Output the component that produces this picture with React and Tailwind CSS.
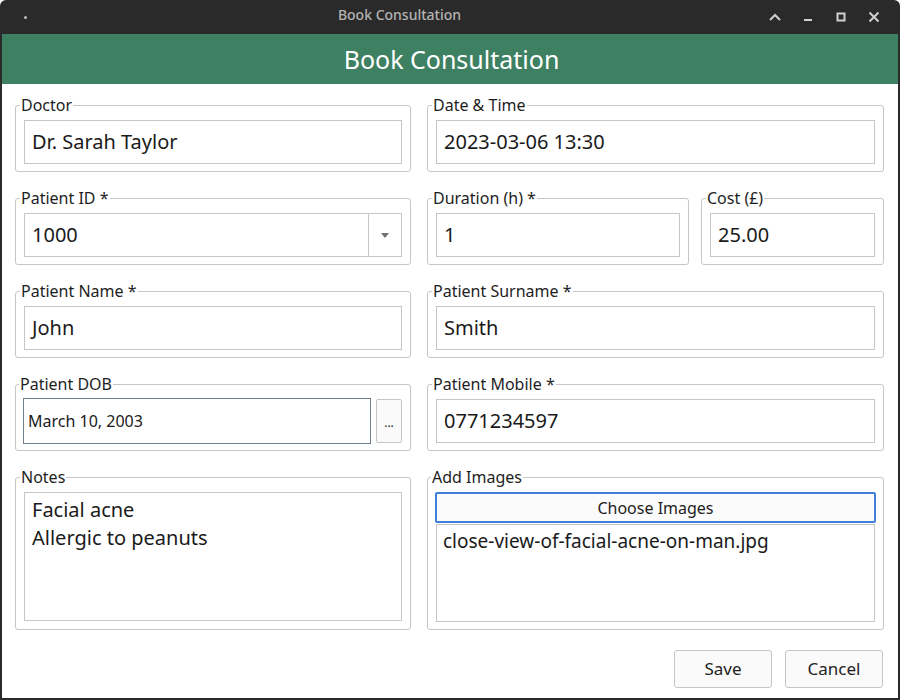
import { useState } from "react";

const font = { fontFamily: '"Noto Sans", "Open Sans", sans-serif' };

const Group = ({ label, className = "", children }) => (
  <fieldset
    className={`border border-[#c6c6c6] rounded-[3px] px-[8px] pt-[5px] pb-[7px] min-w-0 ${className}`}
  >
    <legend className="ml-[-4px] px-[1px] text-[16px] leading-[20px] text-[#1e1e1e]">
      {label}
    </legend>
    {children}
  </fieldset>
);

const TextBox = ({ value }) => (
  <div className="h-[44px] border border-[#c6c6c6] flex items-center px-[7px] text-[20px] text-[#1a1a1a] bg-white">
    {value}
  </div>
);

const App = () => {
  const [notes] = useState(["Facial acne", "Allergic to peanuts"]);

  return (
    <div
      className="w-[900px] h-[700px] bg-[#2a2a2a] rounded-tl-[6px] rounded-tr-[6px] flex flex-col"
      style={font}
    >
      {/* title bar */}
      <div className="h-[34px] flex items-center">
        <div className="w-[3px] h-[3px] rounded-full bg-[#bdbdbd] ml-[24px]" />
        <div className="flex-1 text-center text-[14px] text-[#b4b4b4] font-medium pb-[6px] pl-[4px]">
          Book Consultation
        </div>
        <div className="flex items-center gap-[19px] mr-[19px] text-[#cfcfcf]">
          <svg width="14" height="14" viewBox="0 0 14 14">
            <path d="M2 10 L7 5 L12 10" fill="none" stroke="currentColor" strokeWidth="2" />
          </svg>
          <svg width="14" height="14" viewBox="0 0 14 14">
            <path d="M3 10 H11" fill="none" stroke="currentColor" strokeWidth="2" />
          </svg>
          <svg width="14" height="14" viewBox="0 0 14 14">
            <rect x="3.5" y="3.5" width="7" height="7" fill="none" stroke="currentColor" strokeWidth="2" />
          </svg>
          <svg width="14" height="14" viewBox="0 0 14 14">
            <path d="M2.5 2.5 L11.5 11.5 M11.5 2.5 L2.5 11.5" fill="none" stroke="currentColor" strokeWidth="2" />
          </svg>
        </div>
      </div>

      {/* window body */}
      <div className="flex-1 mx-[2px] mb-[2px] bg-white flex flex-col">
        <div className="h-[50px] bg-[#3e8062] flex items-center justify-center text-[25px] text-white pt-[2px] pl-[3px]">
          Book Consultation
        </div>

        <div className="px-[13px] pt-[11px] grid grid-cols-[396px_457px] gap-x-[16px] gap-y-[16px]">
          <Group label="Doctor">
            <TextBox value="Dr. Sarah Taylor" />
          </Group>
          <Group label="Date & Time">
            <TextBox value="2023-03-06 13:30" />
          </Group>

          <Group label="Patient ID *">
            <div className="h-[44px] border border-[#c6c6c6] flex items-stretch text-[20px] text-[#1a1a1a]">
              <div className="flex-1 flex items-center px-[7px]">1000</div>
              <div className="w-[33px] border-l border-[#c6c6c6] flex items-center justify-center">
                <svg width="8" height="5" viewBox="0 0 8 5">
                  <path d="M0 0 H8 L4 5 Z" fill="#707070" />
                </svg>
              </div>
            </div>
          </Group>
          <div className="grid grid-cols-[262px_183px] gap-x-[12px]">
            <Group label="Duration (h) *">
              <TextBox value="1" />
            </Group>
            <Group label="Cost (£)">
              <TextBox value="25.00" />
            </Group>
          </div>

          <Group label="Patient Name *">
            <TextBox value="John" />
          </Group>
          <Group label="Patient Surname *">
            <TextBox value="Smith" />
          </Group>

          <Group label="Patient DOB" className="!px-[7px]">
            <div className="flex items-center gap-[5px] h-[44px]">
              <div className="flex-1 h-[46px] border border-[#6f7f8e] flex items-center px-[4px] text-[16px] text-[#1a1a1a]">
                March 10, 2003
              </div>
              <div className="w-[26px] h-[44px] mr-[1px] border border-[#c6c6c6] rounded-[2px] bg-[#fafafa] flex items-center justify-center text-[12px] text-[#222] pt-[4px]">
                ...
              </div>
            </div>
          </Group>
          <Group label="Patient Mobile *">
            <TextBox value="0771234597" />
          </Group>

          <Group label="Notes">
            <div className="h-[129px] border border-[#c6c6c6] px-[7px] pt-[3px] text-[20px] leading-[28px] text-[#1a1a1a]">
              {notes.map((n) => (
                <div key={n}>{n}</div>
              ))}
            </div>
          </Group>
          <Group label="Add Images" className="!px-[7px]">
            <div className="h-[31px] border-2 border-[#3d7fd9] rounded-[2px] bg-[#fbfbfb] flex items-center justify-center text-[16px] text-[#1e1e1e]">
              Choose Images
            </div>
            <div className="mx-[1px] mt-[1px] h-[98px] border border-[#c6c6c6] px-[6px] pt-[2px] text-[19px] leading-[28px] text-[#1a1a1a]">
              close-view-of-facial-acne-on-man.jpg
            </div>
          </Group>
        </div>

        <div className="flex justify-end gap-[13px] pr-[15px] mt-[20px]">
          <button className="w-[98px] h-[38px] border border-[#c6c6c6] rounded-[3px] bg-[#fafafa] text-[17px] text-[#1e1e1e]">
            Save
          </button>
          <button className="w-[98px] h-[38px] border border-[#c6c6c6] rounded-[3px] bg-[#fafafa] text-[17px] text-[#1e1e1e]">
            Cancel
          </button>
        </div>
      </div>
    </div>
  );
};

export default App;
